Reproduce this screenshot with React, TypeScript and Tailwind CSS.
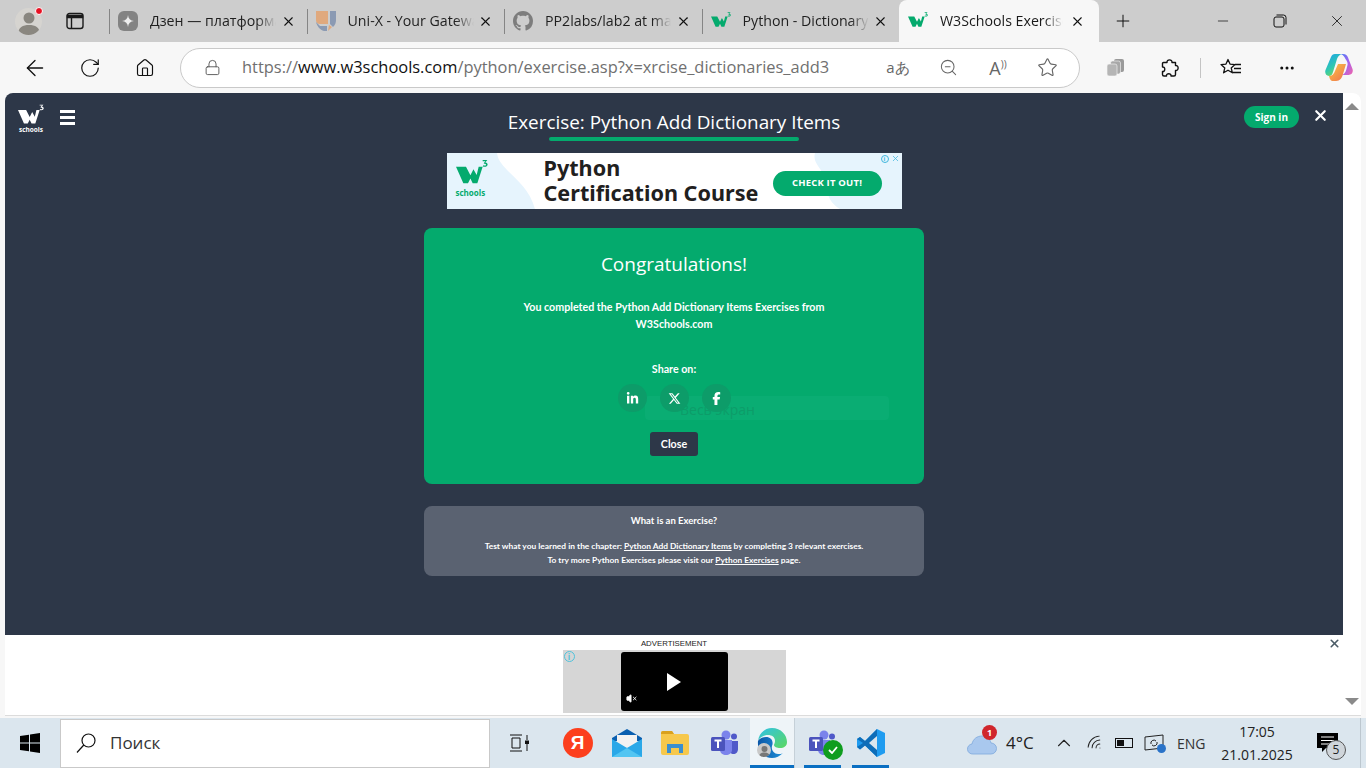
import { ChevronUp, Ellipsis, Home, Lock, Minus, Plus, RotateCw, Star, VolumeX, Wifi, X, ZoomOut, ArrowLeft } from 'lucide-react';
import { FaFacebookF, FaLinkedinIn, FaXTwitter } from 'react-icons/fa6';

function W3Mark({ color = '#04aa6d', size = 20 }: { color?: string; size?: number }) {
  return (
    <svg width={size} height={size} viewBox="0 0 24 24" className="shrink-0">
      <path d="M0 6.500h7.500l3.300 6.500 2.300-4.600 2.400 4.300 1.500-6.200H20l-4 12.500h-3.500l-1.700-3.600L9 19H5.500z" fill={color} />
      <path d="M20 1.500h3.500l-1.500 1.800c1.200.2 1.800.9 1.700 1.800-.1 1.300-1.800 1.900-3.600 1.300l.2-.9c1.100.3 2.200.2 2.200-.5 0-.5-.7-.8-1.600-.7v-.6l1.100-1.300h-2z" fill={color} />
    </svg>
  );
}

function Tab({ title, icon, active }: { title: string; icon: React.ReactNode; active?: boolean }) {
  return (
    <div className={active ? 'relative flex h-[42px] w-[200px] shrink-0 items-center rounded-t-lg bg-[#f7f7f7] pl-[9px] pr-[14px]' : 'flex h-[42px] w-[197.5px] shrink-0 items-center pr-[11px]'}>
      {!active && <div className="mr-[8px] h-[25px] w-px shrink-0 bg-[#858585]" />}
      <div className="flex w-[20px] shrink-0 justify-center">{icon}</div>
      <div className={active ? 'ml-[12px] w-[123px] overflow-hidden whitespace-nowrap text-[14.2px] text-[#1a1a1a] [mask-image:linear-gradient(to_right,black_85%,transparent)]' : 'ml-[12px] w-[126px] overflow-hidden whitespace-nowrap text-[14.2px] text-[#1f1f1f] [mask-image:linear-gradient(to_right,black_85%,transparent)]'}>
        {title}
      </div>
      <X size={15} strokeWidth={1.7} className="ml-auto shrink-0 text-[#111]" />
    </div>
  );
}

function TabStrip() {
  return (
    <div className="flex h-[42px] shrink-0 items-center bg-[#cdcdcd]">
      <div className="flex w-[56px] justify-center pl-[1px]">
        <div className="relative flex h-[27px] w-[27px] items-center justify-center overflow-hidden rounded-full bg-[#d6d4d0]">
          <svg width="27" height="27" viewBox="0 0 27 27">
            <circle cx="14" cy="10" r="5.5" fill="#8a8780" />
            <path d="M3 27c0-8 5-10 11-10s11 2 11 10z" fill="#8a8780" />
          </svg>
        </div>
        <div className="absolute left-[35px] top-[7px] h-[8px] w-[8px] rounded-full border border-white bg-[#e81123]" />
      </div>
      <div className="flex w-[38px] justify-center">
        <svg width="18" height="18" viewBox="0 0 18 18" fill="none" stroke="#1a1a1a" strokeWidth="1.4">
          <rect x="1" y="1.5" width="16" height="15" rx="2.5" />
          <path d="M1.5 3.5h15V5.500h-15z" fill="#1a1a1a" />
          <path d="M5.500 5v11" />
        </svg>
      </div>
      <div className="ml-[15px] flex items-center">
        <Tab
          title="Дзен — платформа"
          icon={
            <div className="flex h-[20px] w-[20px] items-center justify-center rounded-[6px] bg-[#838383]">
              <svg width="12" height="12" viewBox="0 0 12 12"><path d="M6 0c.3 3.600 2.400 5.700 6 6-3.600.3-5.700 2.400-6 6-.3-3.600-2.400-5.700-6-6 3.600-.3 5.700-2.400 6-6z" fill="#eee" /></svg>
            </div>
          }
        />
        <Tab
          title="Uni-X - Your Gateway"
          icon={
            <svg width="20" height="20" viewBox="0 0 20 20">
              <path d="M0 0h12v13H4a4 4 0 0 1-4-4z" fill="#e0a97e" />
              <path d="M14 0h6v9c0 3-1 5-3 7l-3-3z" fill="#8b9ab3" />
              <path d="M0 11c1 4 4 8 8 9h3v-5H4z" fill="#8b9ab3" />
              <path d="M12 20l4-4 -3-2z" fill="#e0a97e" />
            </svg>
          }
        />
        <Tab
          title="PP2labs/lab2 at main"
          icon={
            <svg width="20" height="20" viewBox="0 0 16 16" fill="#7d7d7d">
              <path d="M8 0C3.580 0 0 3.580 0 8c0 3.540 2.290 6.530 5.470 7.590.4.07.55-.17.55-.38 0-.19-.01-.82-.01-1.490-2.010.37-2.530-.49-2.690-.94-.09-.23-.48-.94-.82-1.130-.28-.15-.68-.52-.01-.53.63-.01 1.080.58 1.230.82.72 1.210 1.870.87 2.330.66.07-.52.28-.87.51-1.070-1.780-.2-3.640-.89-3.640-3.950 0-.87.31-1.590.82-2.150-.08-.2-.36-1.020.08-2.120 0 0 .67-.21 2.200.82.64-.18 1.320-.27 2-.27s1.360.09 2 .27c1.530-1.040 2.200-.82 2.200-.82.44 1.100.16 1.920.08 2.120.51.56.82 1.270.82 2.150 0 3.070-1.870 3.750-3.650 3.950.29.25.54.73.54 1.480 0 1.070-.01 1.930-.01 2.200 0 .21.15.46.55.38A8.010 8.010 0 0 0 16 8c0-4.420-3.580-8-8-8z" />
            </svg>
          }
        />
        <Tab title="Python - Dictionary" icon={<W3Mark />} />
        <Tab title="W3Schools Exercise" icon={<W3Mark />} active />
      </div>
      <div className="ml-[14px] flex w-[20px] justify-center">
        <Plus size={24} strokeWidth={1.2} className="text-[#111]" />
      </div>
      <div className="ml-auto flex items-center">
        <div className="flex w-[57px] justify-center"><Minus size={16} strokeWidth={1.1} className="text-[#111]" /></div>
        <div className="flex w-[57px] justify-center">
          <svg width="14" height="14" viewBox="0 0 14 14" fill="none" stroke="#111" strokeWidth="1">
            <rect x="1" y="3" width="10" height="10" rx="2" />
            <path d="M3.500 1h7a2.500 2.500 0 0 1 2.500 2.500v7" />
          </svg>
        </div>
        <div className="flex w-[58px] justify-center"><X size={18} strokeWidth={1.1} className="text-[#111]" /></div>
      </div>
    </div>
  );
}

function Toolbar() {
  return (
    <div className="flex h-[51px] shrink-0 items-center bg-[#f7f7f7] pb-[3px] pt-[3px]">
      <div className="flex w-[62px] justify-center pl-[8px]"><ArrowLeft size={26} strokeWidth={1.2} className="text-[#111]" /></div>
      <div className="flex w-[55px] justify-center"><RotateCw size={22} strokeWidth={1.3} className="text-[#111]" /></div>
      <div className="flex w-[55px] justify-center"><Home size={20} strokeWidth={1.4} className="text-[#111]" /></div>
      <div className="ml-[8px] flex h-[40px] w-[900px] items-center rounded-full border border-[#c9c9c9] bg-white">
        <div className="flex w-[61px] justify-center pl-[2px]"><Lock size={17} strokeWidth={1.3} className="text-[#555]" /></div>
        <div className="w-[620px] whitespace-nowrap text-[16.43px] text-[#707070]">
          https://<span className="text-[#111]">www.w3schools.com</span>/python/exercise.asp?x=xrcise_dictionaries_add3
        </div>
        <div className="ml-auto flex items-center pr-[6px] text-[#666]">
          <div className="flex w-[50px] justify-center text-[15px]">aあ</div>
          <div className="flex w-[50px] justify-center"><ZoomOut size={19} strokeWidth={1.3} /></div>
          <div className="flex w-[50px] justify-center text-[18px] leading-none">A<span className="text-[10px]">))</span></div>
          <div className="flex w-[50px] justify-center pr-[2px]"><Star size={21} strokeWidth={1.3} /></div>
        </div>
      </div>
      <div className="ml-[15px] flex w-[40px] justify-center">
        <svg width="19" height="19" viewBox="0 0 19 19">
          <rect x="8" y="1" width="10" height="13" rx="2" fill="#9a9a9a" />
          <rect x="4.500" y="3" width="10" height="13" rx="2" fill="#a8a8a8" stroke="#f7f7f7" strokeWidth=".6" />
          <rect x="1" y="6" width="10" height="12" rx="2" fill="#b5b5b5" stroke="#f7f7f7" strokeWidth=".6" />
        </svg>
      </div>
      <div className="ml-[15px] flex w-[40px] justify-center">
        <svg width="20" height="20" viewBox="0 0 20 20" fill="none" stroke="#111" strokeWidth="1.400" strokeLinejoin="round">
          <path d="M3.500 4.500h3.500c-.5-3.500 5.500-3.500 5 0h3.500v3c3.500-.5 3.500 5.500 0 5v4c0 1-.5 1.500-1.500 1.500h-3c.5-3-5-3-4.500 0H4c-1 0-1.500-.5-1.500-1.500v-3c3 .5 3-5 0-4.500V5.500c0-.5.500-1 1-1z" />
        </svg>
      </div>
      <div className="ml-[10px] h-[20px] w-px bg-[#c4c4c4]" />
      <div className="ml-[10px] flex w-[40px] justify-center">
        <svg width="22" height="20" viewBox="0 0 22 20" fill="none" stroke="#111" strokeWidth="1.300">
          <path d="M8 1.500l2 4.600 5 .5-3.800 3.300 1.200 4.900L8 12.200l-4.400 2.600 1.200-4.900L1 6.600l5-.5z" strokeLinejoin="round" />
          <path d="M15 6.500h6M14 10.500h7M13 14.500h8" />
        </svg>
      </div>
      <div className="ml-[16px] flex w-[40px] justify-center"><Ellipsis size={18} strokeWidth={2} className="text-[#111]" /></div>
      <div className="ml-[12px] flex w-[40px] justify-center">
        <svg width="28" height="27" viewBox="0 0 28 27">
          <defs>
            <linearGradient id="cpA" x1="0" y1="0" x2="0.6" y2="1"><stop offset="0" stopColor="#1aa0f0" /><stop offset="0.6" stopColor="#30c8b0" /><stop offset="1" stopColor="#7fd84f" /></linearGradient>
            <linearGradient id="cpB" x1="0" y1="0" x2="1" y2="1"><stop offset="0" stopColor="#4f7ff5" /><stop offset="0.5" stopColor="#a662ee" /><stop offset="1" stopColor="#f264a8" /></linearGradient>
            <linearGradient id="cpC" x1="0" y1="0" x2="1" y2="1"><stop offset="0" stopColor="#f7c531" /><stop offset="1" stopColor="#f0603a" /></linearGradient>
          </defs>
          <path d="M10 0h8c-3 0-5 2-6 5L8 18c-1 3-2 4-4 4C1 22-.5 19 .5 16L6 3c.8-2 2-3 4-3z" fill="url(#cpA)" />
          <path d="M16 0h2c3 0 4 1.500 5 3.500L27.500 15c1 3-.5 6-4 6h-7c3-.5 4-3 5-6l1-4c.5-2-.5-4-2-6-1-2-2-4-4.500-5z" fill="url(#cpB)" />
          <path d="M4 22c3 0 5-2 6-5l3-7h8l-3 10c-1 4-3 7-7 7H8c-2 0-3-1-4-5z" fill="url(#cpC)" opacity=".9" />
        </svg>
      </div>
    </div>
  );
}

function ShareButton({ children }: { children: React.ReactNode }) {
  return <div className="flex h-[28px] w-[29px] items-center justify-center rounded-full bg-[#0d9c69] text-white">{children}</div>;
}

function AdBanner() {
  return (
    <div className="relative flex h-[56px] w-[455px] items-center overflow-hidden bg-white">
      <svg className="absolute left-0 top-0" width="455" height="56" viewBox="0 0 455 56">
        <path d="M0 0h50c2 18 30 26 38 56H0z" fill="#e6f4fd" />
        <path d="M455 0h-87c-3 10 8 16 10 26 2 12 2 22 15 30h62z" fill="#e6f4fd" />
      </svg>
      <div className="relative flex w-[97px] flex-col items-start pb-[8px] pl-[9px] text-[#04aa6d]">
        <W3Mark size={32} />
        <div className="-mt-[2px] text-[8px] font-bold leading-[9px] [font-family:'Open_Sans',sans-serif]">schools</div>
      </div>
      <div className="relative whitespace-nowrap pb-[2px] text-[21.6px] font-bold leading-[25px] text-[#1f2020] [font-family:'Noto_Sans',sans-serif]">
        Python
        <br />
        Certification Course
      </div>
      <div className="relative ml-auto mr-[20px] mt-[5px] flex h-[25px] w-[109px] items-center justify-center rounded-full bg-[#04aa6d] text-[9.5px] font-bold tracking-[0.2px] text-white [font-family:'Open_Sans',sans-serif]">
        CHECK IT OUT!
      </div>
      <div className="absolute right-[2px] top-[1px] flex items-center gap-[2px] text-[#3fb6dc]">
        <div className="flex h-[8px] w-[8px] items-center justify-center rounded-full border border-[#3fb6dc] text-[6px] font-bold leading-none">i</div>
        <X size={9} strokeWidth={2} />
      </div>
    </div>
  );
}

function Congrats() {
  return (
    <div className="relative mt-[19px] flex h-[256px] w-[500px] flex-col items-center rounded-lg bg-[#04aa6d] text-white">
      <div className="mt-[22px] text-[19px] leading-[28px]">Congratulations!</div>
      <div className="mt-[20px] w-[310px] text-center text-[10.7px] font-bold leading-[17px] [font-family:Lato,sans-serif]">
        You completed the Python Add Dictionary Items Exercises from W3Schools.com
      </div>
      <div className="mt-[28px] text-[10.7px] font-bold leading-[17px] [font-family:Lato,sans-serif]">Share on:</div>
      <div className="relative z-10 mt-[7px] flex gap-[13px]">
        <ShareButton><FaLinkedinIn size={13} /></ShareButton>
        <ShareButton><FaXTwitter size={13} /></ShareButton>
        <ShareButton><FaFacebookF size={13} /></ShareButton>
      </div>
      <div className="absolute left-[221px] top-[168px] flex h-[24px] w-[244px] items-center rounded-sm bg-[#0aad73] pl-[35px] pt-[2px] text-[14px] text-[#0d9c69]">
        Весь экран
      </div>
      <div className="mt-[20px] flex h-[24px] w-[48px] items-center justify-center rounded-[3px] bg-[#2d3748] text-[10.7px] font-bold [font-family:Lato,sans-serif]">Close</div>
    </div>
  );
}

function InfoPanel() {
  return (
    <div className="mt-[22px] flex h-[70px] w-[500px] flex-col items-center rounded-lg bg-[#5a6271] pt-[8px] text-[9.5px] font-bold leading-[14px] text-white [font-family:Lato,sans-serif]">
      <div>What is an Exercise?</div>
      <div className="mt-[11px] text-[8.4px]">
        Test what you learned in the chapter: <span className="underline">Python Add Dictionary Items</span> by completing 3 relevant exercises.
      </div>
      <div className="text-[8.4px]">
        To try more Python Exercises please visit our <span className="underline">Python Exercises</span> page.
      </div>
    </div>
  );
}

function Page() {
  return (
    <div className="flex min-w-0 flex-1 flex-col">
      <div className="relative flex flex-1 flex-col items-center bg-[#2d3748] [font-family:'Open_Sans',sans-serif]">
        <div className="absolute left-[12px] top-[10px] flex items-start gap-[15px]">
          <div className="flex w-[28px] flex-col items-center text-white">
            <W3Mark color="#ffffff" size={26} />
            <div className="-mt-[3px] text-[6.5px] font-bold leading-[8px]">schools</div>
          </div>
          <div className="mt-[7px] flex w-[15px] flex-col gap-[3px]">
            <div className="h-[3px] bg-white" />
            <div className="h-[3px] bg-white" />
            <div className="h-[3px] bg-white" />
          </div>
        </div>
        <div className="absolute right-[44px] top-[13px] flex h-[22px] w-[55px] items-center justify-center rounded-full bg-[#04aa6d] text-[10px] font-bold text-white">Sign in</div>
        <X size={17} strokeWidth={3} className="absolute right-[14px] top-[14px] text-white" />
        <div className="mt-[14px] text-[18.9px] leading-[30px] text-white">Exercise: Python Add Dictionary Items</div>
        <div className="h-[4px] w-[250px] rounded-full bg-[#04aa6d]" />
        <div className="mt-[12px]"><AdBanner /></div>
        <Congrats />
        <InfoPanel />
      </div>
      <div className="relative flex h-[80px] shrink-0 flex-col items-center bg-white">
        <div className="mt-[3px] text-[7.800px] leading-[11px] text-[#222] [font-family:'Liberation_Sans',sans-serif]">ADVERTISEMENT</div>
        <div className="relative mt-[1px] flex h-[63px] w-[223px] justify-center bg-[#d6d6d6] pt-[2px]">
          <div className="absolute left-[1px] top-[1px] flex h-[11px] w-[11px] items-center justify-center rounded-full border border-[#4fc3dc] text-[8px] font-bold leading-none text-[#4fc3dc]">i</div>
          <div className="relative flex h-[59px] w-[107px] items-center justify-center rounded-[3px] bg-black">
            <svg width="14" height="18" viewBox="0 0 14 18"><path d="M0 0l14 9L0 18z" fill="white" /></svg>
            <VolumeX size={11} fill="white" className="absolute bottom-[7px] left-[5px] text-white" />
          </div>
        </div>
        <X size={13} strokeWidth={3} className="absolute right-[2px] top-[2px] text-[#4a5a66]" />
      </div>
    </div>
  );
}

function Scrollbar() {
  return (
    <div className="flex w-[18px] shrink-0 flex-col items-center justify-between rounded-tr-lg bg-white py-[10px]">
      <div className="h-0 w-0 border-x-[7px] border-b-[7px] border-x-transparent border-b-[#8a8a8a]" />
      <div className="h-0 w-0 border-x-[7px] border-t-[7px] border-x-transparent border-t-[#8a8a8a]" />
    </div>
  );
}

function TaskIcon({ width, children, active, running }: { width: number; children: React.ReactNode; active?: boolean; running?: boolean }) {
  return (
    <div style={{ width }} className={active ? 'relative flex h-full shrink-0 items-center justify-center bg-[#eef4f8]' : 'relative flex h-full shrink-0 items-center justify-center'}>
      {children}
      {running && <div className="absolute bottom-0 left-0 right-0 h-[3px] bg-[#0a6fc2]" />}
    </div>
  );
}

function TeamsIcon({ badge }: { badge?: boolean }) {
  return (
    <div className="relative h-[26px] w-[28px]">
      <svg width="28" height="26" viewBox="0 0 28 26">
        <circle cx="15" cy="5" r="4.500" fill="#7b83eb" />
        <circle cx="23" cy="6.500" r="3" fill="#5059c9" />
        <path d="M18 11h9v8c0 3-2 5-4.500 5S18 22 18 19z" fill="#5059c9" />
        <path d="M9 10h12v10c0 3-3 5-6 5s-6-2-6-5z" fill="#7b83eb" />
        <rect x="0" y="7" width="14" height="14" rx="1.500" fill="#4b53bc" />
        <path d="M3.500 10.500h7M7 10.500V18" stroke="white" strokeWidth="2" />
      </svg>
      {badge && (
        <div className="absolute -bottom-[4px] -right-[6px] flex h-[20px] w-[20px] items-center justify-center rounded-full bg-[#0f9d1f]">
          <svg width="10" height="8" viewBox="0 0 10 8" fill="none" stroke="white" strokeWidth="1.800"><path d="M1 4l3 3 5-6" /></svg>
        </div>
      )}
    </div>
  );
}

function Taskbar() {
  return (
    <div className="flex h-[50px] shrink-0 items-center bg-[#dbe6ee]">
      <div className="flex w-[60px] justify-center">
        <svg width="20" height="20" viewBox="0 0 20 20" fill="#000">
          <path d="M0 3l9-1.300V9.500H0zM10 1.500L20 0v9.500H10zM0 10.500h9v7.800L0 17zM10 10.500h10V20l-10-1.500z" />
        </svg>
      </div>
      <div className="flex h-[49px] w-[430px] items-center border border-[#c9c9c9] bg-white pl-[14px] [font-family:'Open_Sans',sans-serif]">
        <svg width="22" height="22" viewBox="0 0 22 22" fill="none" stroke="#111" strokeWidth="1.200">
          <circle cx="13.500" cy="8.500" r="6.500" />
          <path d="M8.800 13L2 20.500" />
        </svg>
        <span className="ml-[13px] text-[17px] text-[#333]">Поиск</span>
      </div>
      <div className="flex h-full w-[260px] items-center">
        <TaskIcon width={58}>
          <svg width="20" height="18" viewBox="0 0 20 18" fill="none" stroke="#111" strokeWidth="1">
            <path d="M1 1h12M1 17h12M3 4h8v10H3zM18 1v5M18 10v7" />
            <rect x="16.500" y="7" width="3" height="2.500" fill="#111" />
          </svg>
        </TaskIcon>
        <TaskIcon width={59}>
          <div className="flex h-[30px] w-[30px] items-center justify-center rounded-full bg-[#fc3f1d] text-[19px] font-bold text-white [font-family:'Liberation_Sans',sans-serif]">Я</div>
        </TaskIcon>
        <TaskIcon width={40}>
          <svg width="30" height="28" viewBox="0 0 30 28">
            <path d="M15 0l15 9v3H0V9z" fill="#0a5fb0" />
            <path d="M5 6h20v12H5z" fill="#f2f2f2" />
            <path d="M0 10l15 9 15-9v18H0z" fill="#2aa8e8" />
            <path d="M0 28l15-9 15 9z" fill="#52c5f2" />
          </svg>
        </TaskIcon>
        <TaskIcon width={56}>
          <svg width="28" height="24" viewBox="0 0 28 24">
            <path d="M0 2a2 2 0 0 1 2-2h9l2 3h13a2 2 0 0 1 2 2v17a2 2 0 0 1-2 2H2a2 2 0 0 1-2-2z" fill="#f6c84c" />
            <path d="M0 2a2 2 0 0 1 2-2h9l2 3H0z" fill="#d9a11f" />
            <path d="M6 22v-9h16v9h-4v-5h-8v5z" fill="#3a8fd0" />
          </svg>
        </TaskIcon>
        <TaskIcon width={44}><TeamsIcon /></TaskIcon>
      </div>
      <div className="flex h-full items-center">
        <TaskIcon width={44} active running>
          <div className="relative h-[30px] w-[30px]">
            <svg width="30" height="30" viewBox="0 0 30 30">
              <defs>
                <linearGradient id="edA" x1="0" y1="0" x2="1" y2="1"><stop offset="0" stopColor="#2fc2e8" /><stop offset="1" stopColor="#5bd85f" /></linearGradient>
                <linearGradient id="edB" x1="0" y1="0" x2="1" y2="0"><stop offset="0" stopColor="#0b57a8" /><stop offset="1" stopColor="#1e90d8" /></linearGradient>
              </defs>
              <path d="M1 13C2 5 8 0 15 0c9 0 15 7 15 14 0 4-3 6-7 6-3 0-6-1-6-3 0-1 1-2 1-4 0-4-3-6-7-6-5 0-9 3-10 6z" fill="url(#edA)" />
              <path d="M1 13c1-2 4-4 8-4 5 0 8 4 6 9-1 4 2 8 6 8 2 0 4 0 5-1-3 3-7 5-11 5C7 30 0 23 1 13z" fill="url(#edB)" />
            </svg>
            <div className="absolute -left-0 bottom-[1px] flex h-[14px] w-[14px] items-end justify-center overflow-hidden rounded-full bg-[#c9c9c9]">
              <svg width="11" height="12" viewBox="0 0 11 12" fill="#777"><circle cx="5.500" cy="4" r="3" /><path d="M0 12c0-3 2-4.500 5.500-4.500S11 9 11 12z" /></svg>
            </div>
          </div>
        </TaskIcon>
        <div className="h-full w-px bg-[#c5d0d8]" />
        <div className="w-[9px]" />
        <TaskIcon width={37} running><TeamsIcon badge /></TaskIcon>
        <div className="w-[11px]" />
        <TaskIcon width={37} running>
          <svg width="30" height="30" viewBox="0 0 30 30">
            <path d="M21 1l8 4v20l-8 4-12-11.500-5 4L1 19V11l3-2 5 4z" fill="#1f9cf0" />
            <path d="M21 1v28L9 17.500l-5 4L1 19l6-4-6-4 3-2 5 4z" fill="#0e6db8" />
            <path d="M21 8l-8 7 8 7z" fill="#dbe6ee" />
          </svg>
        </TaskIcon>
      </div>
      <div className="ml-auto flex h-full items-center text-[#222] [font-family:'Open_Sans',sans-serif]">
        <div className="relative mr-[9px] h-[24px] w-[30px]">
          <svg width="30" height="24" viewBox="0 0 30 24">
            <path d="M6 23a5 5 0 0 1-1-10c1-5 5-8 10-8 5 0 8 3 9 7a5.500 5.500 0 0 1 0 11z" fill="#a9c8ee" stroke="#7ea8dc" strokeWidth=".8" />
          </svg>
          <div className="absolute -top-[6px] right-0 flex h-[15px] w-[15px] items-center justify-center rounded-full bg-[#d0262c] text-[9px] font-bold text-white">1</div>
        </div>
        <div className="w-[38px] text-[17px]">4°C</div>
        <div className="flex w-[40px] justify-center"><ChevronUp size={22} strokeWidth={1.2} /></div>
        <div className="flex w-[22px] justify-center"><Wifi size={19} strokeWidth={1.2} className="rotate-[-45deg]" /></div>
        <div className="ml-[3px] flex w-[30px] justify-center">
          <div className="flex h-[10px] w-[18px] items-center border border-[#111] p-[1px]"><div className="h-full w-[7px] bg-[#111]" /></div>
        </div>
        <div className="relative flex w-[30px] justify-center">
          <svg width="20" height="18" viewBox="0 0 20 18" fill="none" stroke="#222" strokeWidth="1"><path d="M1 3l18-2v13l-18 2zM7 10a3 3 0 0 1 5-3M13 8a3 3 0 0 1-5 3" /></svg>
          <div className="absolute -bottom-[1px] right-[3px] h-[9px] w-[9px] rounded-full bg-[#2a73c8]" />
        </div>
        <div className="ml-[8px] w-[32px] text-[14px] text-[#333]">ENG</div>
        <div className="ml-[12px] w-[72px] text-center text-[14px] leading-[23px] text-[#222]">
          17:05
          <br />
          21.01.2025
        </div>
        <div className="relative ml-[23px] flex w-[22px] justify-center">
          <svg width="21" height="20" viewBox="0 0 21 20"><path d="M0 0h21v15H9l-4 4v-4H0z" fill="#000" /><path d="M4 4h13M4 7.500h13M4 11h13" stroke="white" strokeWidth="1" /></svg>
          <div className="absolute -bottom-[7px] -right-[8px] flex h-[20px] w-[20px] items-center justify-center rounded-full border border-[#555] bg-[#cfd5da] text-[12px]">5</div>
        </div>
        <div className="ml-[22px] h-full w-px bg-[#bcc7cf]" />
        <div className="w-[5px]" />
      </div>
    </div>
  );
}

export default function App() {
  return (
    <div className="relative flex h-[768px] w-[1366px] flex-col overflow-hidden bg-[#f7f7f7] [font-family:'Open_Sans',sans-serif]">
      <TabStrip />
      <Toolbar />
      <div className="flex min-h-0 flex-1 pl-[5px] pr-[5px]">
        <div className="flex min-w-0 flex-1 overflow-hidden rounded-t-lg border-b border-[#dcdcdc]">
          <Page />
          <Scrollbar />
        </div>
      </div>
      <div className="h-[2px] shrink-0 bg-[#f7f7f7]" />
      <Taskbar />
    </div>
  );
}
